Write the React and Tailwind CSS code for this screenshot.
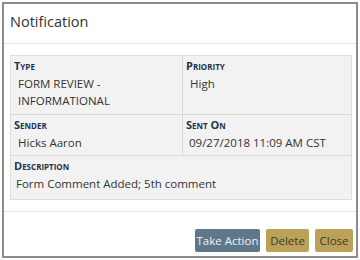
export default function App() {
  const label = "text-[11px] font-bold [font-variant:small-caps] text-[#1f3350] leading-[14px]";
  const value = "text-[11.5px] text-[#333] leading-[17px] pt-[2px]";
  return (
    <div className="p-[2px] bg-white" style={{ fontFamily: '"Open Sans", "Liberation Sans", sans-serif' }}>
      <div className="w-[356px] h-[256px] border-2 border-[#8c8c8c] bg-white flex flex-col">
        <div className="h-[40px] border-b border-[#e6e6e6] flex items-center pl-[6px] pb-[3px] shrink-0">
          <span className="text-[14.5px] text-[#333] leading-none">Notification</span>
        </div>
        <div className="pt-[11px] pl-[6px] pr-[4px] pb-[11px] border-b border-[#e6e6e6] shrink-0">
          <div className="border border-[#dedede] bg-[#f2f2f2]">
            <div className="flex h-[59px] border-b border-[#d8d8d8]">
              <div className="w-[172px] border-r border-[#d8d8d8] pl-[3px] pt-[3px]">
                <div className={label}>Type</div>
                <div className={`pl-[4px] ${value}`}>FORM REVIEW -<br />INFORMATIONAL</div>
              </div>
              <div className="flex-1 pl-[3px] pt-[3px]">
                <div className={label}>Priority</div>
                <div className={`pl-[4px] ${value}`}>High</div>
              </div>
            </div>
            <div className="flex h-[41px] border-b border-[#d8d8d8]">
              <div className="w-[172px] border-r border-[#d8d8d8] pl-[3px] pt-[3px]">
                <div className={label}>Sender</div>
                <div className={`pl-[4px] ${value}`}>Hicks Aaron</div>
              </div>
              <div className="flex-1 pl-[3px] pt-[3px]">
                <div className={label}>Sent On</div>
                <div className={`pl-[3px] ${value}`}>09/27/2018 11:09 AM CST</div>
              </div>
            </div>
            <div className="h-[43px] pl-[3px] pt-[3px]">
              <div className={label}>Description</div>
              <div className={`pl-[2px] ${value}`}>Form Comment Added; 5th comment</div>
            </div>
          </div>
        </div>
        <div className="flex-1 flex items-end justify-end gap-[6px] pr-[3px] pb-[4px]">
          <button className="h-[23px] w-[65px] rounded-[2px] bg-[#5f7889] text-[#eef2f5] text-[11.5px] leading-none whitespace-nowrap">Take Action</button>
          <button className="h-[23px] w-[43px] rounded-[2px] bg-[#bca259] text-[#3e3a30] text-[11.5px] leading-none">Delete</button>
          <button className="h-[23px] w-[38px] rounded-[2px] bg-[#bca259] text-[#3e3a30] text-[11.5px] leading-none">Close</button>
        </div>
      </div>
    </div>
  );
}
